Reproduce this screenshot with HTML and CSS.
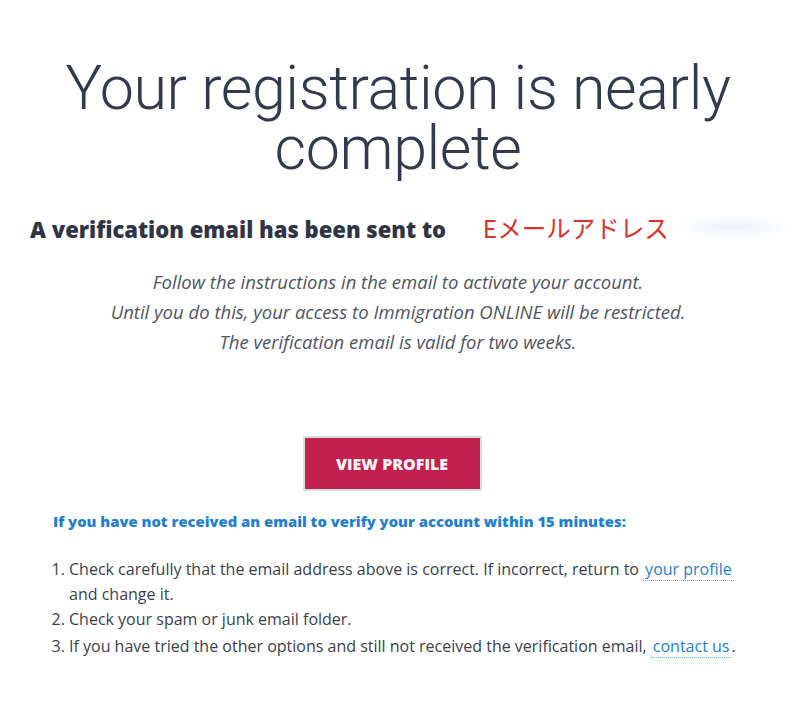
FILE: index.html
```html
<!DOCTYPE html>
<html lang="en">
<head>
  <meta charset="UTF-8" />
  <meta name="viewport" content="width=device-width, initial-scale=1" />
  <title>Registration nearly complete</title>
  <link rel="stylesheet" href="styles.css">
</head>
<body>
  <main class="page">
    <h1 class="title">Your registration is nearly<br>complete</h1>

    <p class="sent">
      A verification email has been sent to
      <span class="address">Eメールアドレス<span class="smudge"></span></span>
    </p>

    <div class="notes">
      <p>Follow the instructions in the email to activate your account.</p>
      <p>Until you do this, your access to Immigration ONLINE will be restricted.</p>
      <p>The verification email is valid for two weeks.</p>
    </div>

    <div class="actions">
      <a class="btn" href="#">VIEW PROFILE</a>
    </div>

    <h2 class="help-title">If you have not received an email to verify your account within 15 minutes:</h2>
    <ol class="help-list">
      <li>Check carefully that the email address above is correct. If incorrect, return to <a href="#">your profile</a> and change it.</li>
      <li>Check your spam or junk email folder.</li>
      <li>If you have tried the other options and still not received the verification email, <a href="#">contact us</a>.</li>
    </ol>
  </main>
</body>
</html>
```

FILE: styles.css
```css
body {
  margin: 0;
  background-color: #fff;
  color: #2f3547;
  font-family: "Open Sans", Arial, sans-serif;
}
.page {
  padding: 58px 0 40px;
}
.title {
  margin: 0;
  text-align: center;
  font-family: Roboto, "Open Sans", sans-serif;
  font-weight: 300;
  font-size: 61px;
  letter-spacing: -0.4px;
  line-height: 60px;
  color: #333a4d;
}
.sent {
  margin: 32px 0 0 30px;
  font-weight: 800;
  font-size: 22px;
  color: #2f3547;
  white-space: nowrap;
}
.address {
  position: relative;
  margin-left: 31px;
  font-family: "Noto Sans CJK JP", sans-serif;
  font-weight: 400;
  font-size: 24.5px;
  color: #d9322f;
}
.smudge {
  position: absolute;
  left: 190px;
  top: 4px;
  width: 120px;
  height: 26px;
  border-radius: 50%;
  background: radial-gradient(ellipse at center, rgba(214, 232, 244, 0.55), rgba(255, 255, 255, 0) 70%);
}
.notes {
  margin-top: 22px;
  text-align: center;
  font-style: italic;
  font-size: 18.5px;
  line-height: 30px;
  color: #4f5461;
}
.notes p {
  margin: 0;
}
.actions {
  margin-top: 79px;
  display: flex;
  justify-content: center;
  padding-right: 12px;
}
.btn {
  display: flex;
  align-items: center;
  justify-content: center;
  width: 175px;
  height: 51px;
  border: 2px solid #dcdcdc;
  background-color: #c2214f;
  color: #f4f4f4;
  font-weight: 800;
  font-size: 16px;
  text-decoration: none;
}
.help-title {
  margin: 20px 0 0 53px;
  font-size: 14.8px;
  font-weight: 800;
  color: #1f7fd1;
}
.help-list {
  margin: 26px 0 0;
  padding: 0 56px 0 69px;
  font-size: 16px;
  line-height: 25px;
  color: #3a3f4a;
}
.help-list li:last-child {
  margin-top: 2px;
}
.help-list a {
  color: #1f7fd1;
  text-decoration: none;
  border-bottom: 1px dotted #6aaee6;
  padding: 0 2px;
}
```
